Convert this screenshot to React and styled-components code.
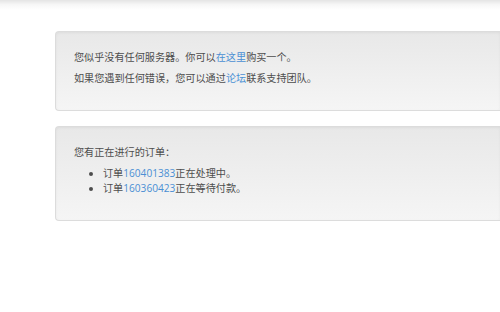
import React from 'react';
import styled, { createGlobalStyle } from 'styled-components';

const GlobalStyle = createGlobalStyle`
  html, body {
    margin: 0;
    padding: 0;
    background: #fff;
    overflow: hidden;
  }
  body {
    font-family: "Open Sans", "Noto Sans CJK SC", sans-serif;
    font-size: 10.15px;
    line-height: 15px;
    color: #4d4d4d;
  }
`;

const TopShade = styled.div`
  height: 10px;
  background: linear-gradient(to bottom, #e4e4e4 0%, #f6f6f6 45%, #fff 100%);
`;

const Content = styled.div`
  padding-top: 21px;
  margin-left: 55px;
`;

const Well = styled.div`
  min-height: 20px;
  padding: 18px;
  margin-bottom: 15px;
  border: 1px solid #dcdcdc;
  border-right: none;
  border-radius: 4px 0 0 4px;
  background: linear-gradient(to bottom, #e8e8e8 0%, #f5f5f5 100%);
  box-shadow: inset 0 1px 3px rgba(0, 0, 0, 0.05), 0 1px 0 rgba(255, 255, 255, 0.1);
`;

const Text = styled.p`
  margin: 0 0 6px;
`;

const List = styled.ul`
  margin: 0 0 6px;
  padding-left: 29px;
`;

const Item = styled.li`
  line-height: 15px;
`;

const Link = styled.a`
  color: #4a8fd4;
  text-decoration: none;
`;

const orders = [
  { id: '160401383', status: '正在处理中。' },
  { id: '160360423', status: '正在等待付款。' },
];

export default function App() {
  return (
    <>
      <GlobalStyle />
      <TopShade />
      <Content>
        <Well>
          <Text>您似乎没有任何服务器。你可以<Link href="#">在这里</Link>购买一个。</Text>
          <Text>如果您遇到任何错误，您可以通过<Link href="#">论坛</Link>联系支持团队。</Text>
        </Well>
        <Well>
          <Text>您有正在进行的订单：</Text>
          <List>
            {orders.map(order => (
              <Item key={order.id}>
                订单<Link href="#">{order.id}</Link>{order.status}
              </Item>
            ))}
          </List>
        </Well>
      </Content>
    </>
  );
}
